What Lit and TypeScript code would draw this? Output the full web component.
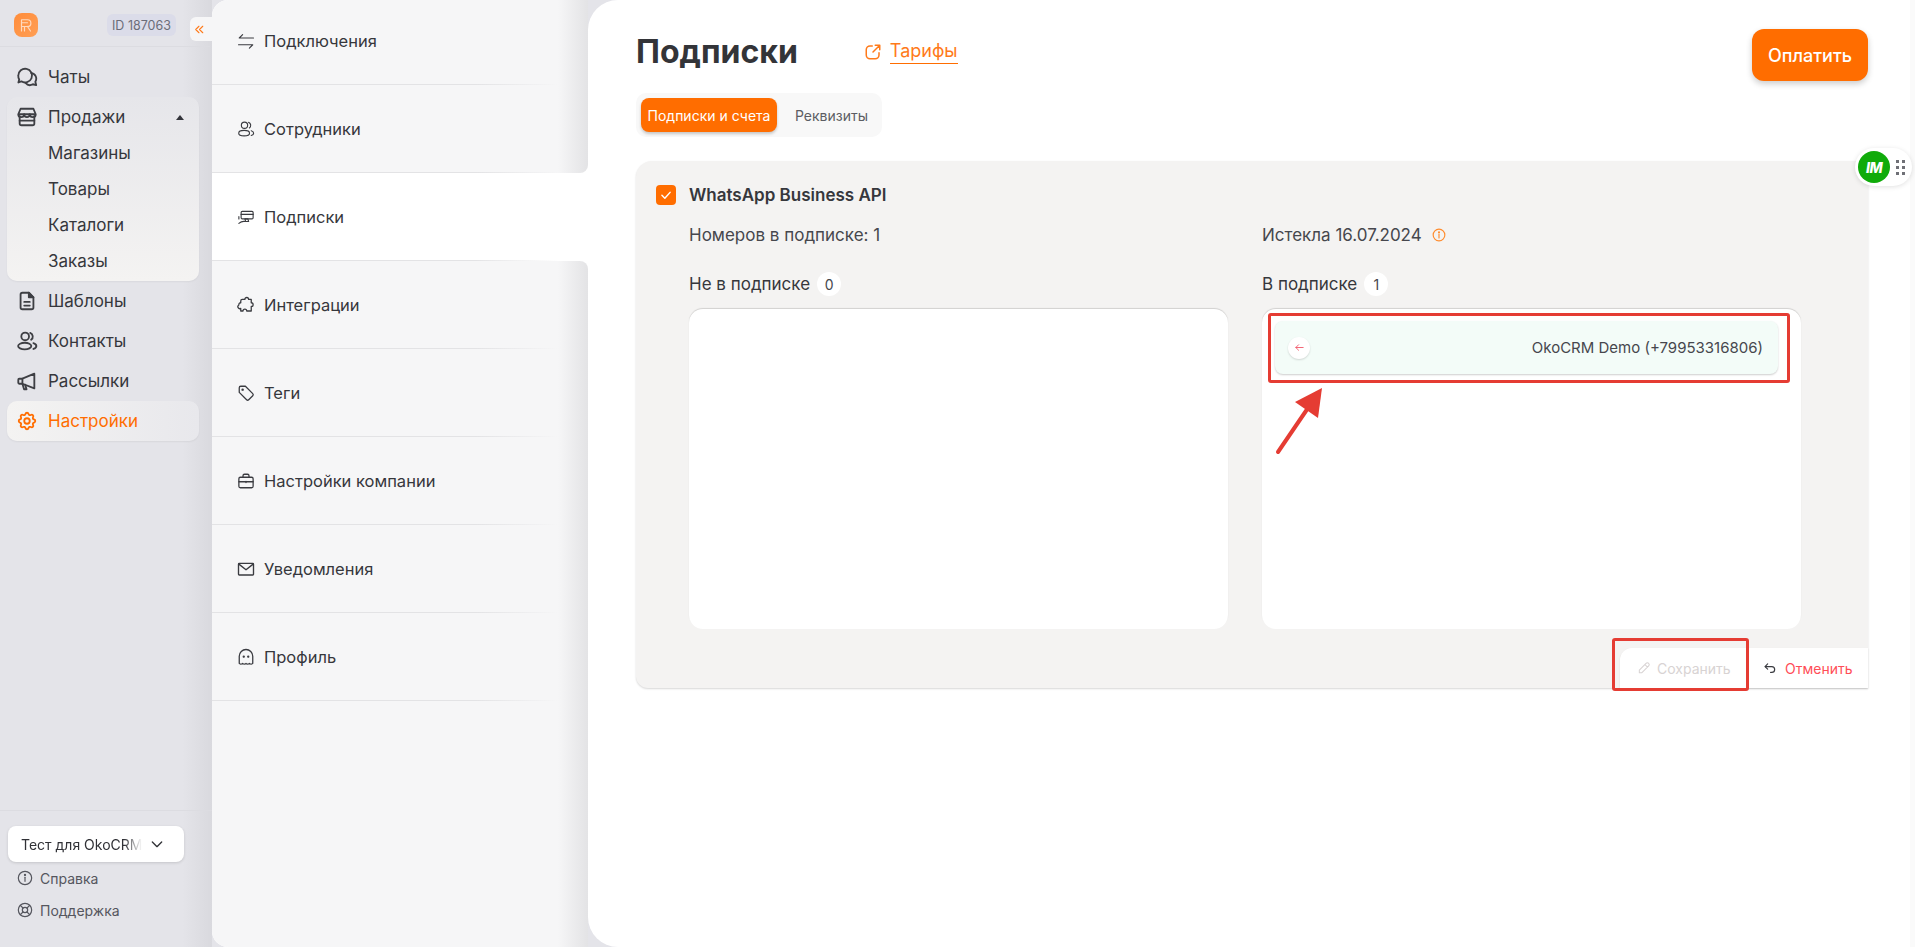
import { LitElement, html, css, svg } from "lit";
import { customElement } from "lit/decorators.js";

const ic = (body: unknown, size = 22, sw = 2) => html`<svg class="ic" width=${size} height=${size} viewBox="0 0 24 24" fill="none" stroke="currentColor" stroke-width=${sw} stroke-linecap="round" stroke-linejoin="round">${body}</svg>`;

const I = {
  chats: svg`<path d="M2.5 10.5a7.5 7.5 0 1 1 3.3 6.2L2.6 18l.9-3.2a7.5 7.5 0 0 1-1-4.3z"/><path d="M16.5 7.6a6.3 6.3 0 0 1 4.6 9.6l.9 3.6-3.6-.9a6.3 6.3 0 0 1-8-1.4"/>`,
  store: svg`<path d="M4 11v8a2 2 0 0 0 2 2h12a2 2 0 0 0 2-2v-8"/><path d="M5 3h14l2.5 6a3.2 3.2 0 0 1-6.4 0 3.1 3.1 0 0 1-6.2 0 3.2 3.2 0 0 1-6.4 0z"/><path d="M3 9h18M4 16h16"/>`,
  file: svg`<path d="M14 3H7a2 2 0 0 0-2 2v14a2 2 0 0 0 2 2h10a2 2 0 0 0 2-2V8z"/><path d="M14 3v5h5z" fill="currentColor"/><path d="M9 13h6M9 17h6"/>`,
  users: svg`<circle cx="10" cy="7" r="4.2"/><ellipse cx="9.5" cy="17.5" rx="7.2" ry="3.6"/><path d="M15.5 3.2a4.2 4.2 0 0 1 1 7.4"/><path d="M19 14.3c1.900.6 3.200 1.800 3.200 3.200s-1.300 2.600-3.200 3.200"/>`,
  mega: svg`<path d="M2.500 11.500v2.500a1 1 0 0 0 1 1H7l13 5V4L7 9.500H3.500a1 1 0 0 0-1 1z"/><path d="M7 9.500V15l1.800 6h2.700l-1.500-5"/>`,
  gear: svg`<path d="M10.325 4.317c.426 -1.756 2.924 -1.756 3.35 0a1.724 1.724 0 0 0 2.573 1.066c1.543 -.94 3.31 .826 2.37 2.37a1.724 1.724 0 0 0 1.065 2.572c1.756 .426 1.756 2.924 0 3.35a1.724 1.724 0 0 0 -1.066 2.573c.94 1.543 -.826 3.31 -2.37 2.37a1.724 1.724 0 0 0 -2.572 1.065c-.426 1.756 -2.924 1.756 -3.35 0a1.724 1.724 0 0 0 -2.573 -1.066c-1.543 .94 -3.31 -.826 -2.37 -2.37a1.724 1.724 0 0 0 -1.065 -2.572c-1.756 -.426 -1.756 -2.924 0 -3.35a1.724 1.724 0 0 0 1.066 -2.573c-.94 -1.543 .826 -3.31 2.37 -2.37c1 .608 2.296 .07 2.572 -1.065z"/><circle cx="12" cy="12" r="3"/>`,
  swap: svg`<path d="M22 8H3l4.500-4.500"/><path d="M2 17h19l-4.500 4.500"/>`,
  sub: svg`<path d="M7 4.500h13a1.500 1.500 0 0 1 1.500 1.500v7a1.500 1.500 0 0 1-1.500 1.500H7a1.500 1.500 0 0 1-1.500-1.500V6A1.500 1.500 0 0 1 7 4.500z"/><path d="M5.500 8.500h16"/><path d="M2.500 11.500v3M2.500 20.500c3-2.500 5-3 8-2.500h5l-1-3.500h-4l1 3.500"/>`,
  puzzle: svg`<path d="M8 4.500h3.500a2.500 2.500 0 0 1 5 0H20v4.500a2.500 2.500 0 0 1 0 5V20h-6a2.500 2.500 0 0 0-5 0H6v-3.500a2.500 2.500 0 0 1-2.500-4.500A2.500 2.500 0 0 1 6 9V6.500a2 2 0 0 1 2-2z" transform="translate(-1 0)"/>`,
  tag: svg`<path d="M3 5a2 2 0 0 1 2-2h6.200L21 12.800a2 2 0 0 1 0 2.800L15.600 21a2 2 0 0 1-2.800 0L3 11.200z"/><circle cx="7.500" cy="7.500" r=".8" fill="currentColor"/>`,
  case: svg`<rect x="2.500" y="7" width="19" height="14" rx="2"/><path d="M8 7V5a2 2 0 0 1 2-2h4a2 2 0 0 1 2 2v2"/><path d="M2.500 13h19M12 12.500v1.500"/>`,
  mail: svg`<rect x="2" y="4.500" width="20" height="15.500" rx="1"/><path d="M2.500 5.500 12 13l9.500-7.500"/>`,
  ghost: svg`<path d="M3 20.500V11a9 9 0 0 1 18 0v9.500c-1.500 1.300-3 1.300-4.500 0-1.500 1.300-3 1.300-4.500 0-1.500 1.300-3 1.300-4.500 0-1.500 1.300-3 1.300-4.500 0z"/><circle cx="9" cy="11.500" r=".7" fill="currentColor"/><circle cx="15" cy="11.500" r=".7" fill="currentColor"/>`,
  ext: svg`<path d="M11 4H8a5 5 0 0 0-5 5v7a5 5 0 0 0 5 5h7a5 5 0 0 0 5-5v-3"/><path d="M12 12 21 3M15 3h6v6"/>`,
  info: svg`<circle cx="12" cy="12" r="10"/><path d="M12 11v6"/><circle cx="12" cy="7.500" r=".8" fill="currentColor"/>`,
  buoy: svg`<circle cx="12" cy="12" r="10"/><circle cx="12" cy="12" r="4"/><path d="m5 5 4 4M19 5l-4 4M5 19l4-4M19 19l-4-4"/>`,
  chev: svg`<path d="m5 9 7 7 7-7"/>`,
  check: svg`<path d="m5 12.500 5 5 9-10"/>`,
  left: svg`<path d="M20 12H4M10 6l-6 6 6 6"/>`,
  pencil: svg`<path d="M4 20v-4.500L15.500 4a2.500 2.500 0 0 1 4.500 4.500L8.500 20zM13.500 6l4.500 4.500"/>`,
  undo: svg`<path d="M8 5 3.500 9.500 8 14"/><path d="M4 9.500h11a5 5 0 0 1 0 10h-2"/>`,
  dbl: svg`<path d="M11 6l-6 6 6 6M18 6l-6 6 6 6"/>`,
};

@customElement("app-root")
export class AppRoot extends LitElement {
  static styles = css`
    :host { display: block; height: 100vh; font-family: Inter, "Noto Sans", sans-serif; color: #36373c; }
    * { box-sizing: border-box; }
    .ic { display: block; flex: none; }
    .root { position: relative; display: flex; height: 947px; width: 1915px; overflow: hidden; background: #e4e4e9; }

    .side { width: 212px; flex: none; display: flex; flex-direction: column; background: linear-gradient(to right, #e4e4e9 86%, #d9d9de 100%); }
    .top { height: 47px; flex: none; display: flex; align-items: flex-start; justify-content: space-between; padding: 13px 34px 0 14px; border-bottom: 1px solid #dcdce1; margin-right: 2px; }
    .logo { width: 24px; height: 24px; border-radius: 8px; background: linear-gradient(135deg, #ff8c3a, #ff9f55); display: flex; align-items: center; justify-content: center; color: #ffd9bd; }
    .id { height: 22px; width: 69px; margin-top: 1px; border-radius: 6px; background: #dbdce9; color: #6b6c78; font-size: 12.500px; display: flex; align-items: center; justify-content: center; }
    nav { padding-top: 10px; display: flex; flex-direction: column; }
    .nv { height: 40px; margin: 0 13px 0 7px; padding-left: 9px; display: flex; align-items: center; gap: 10px; font-size: 17px; border-radius: 10px; color: #36373c; }
    .nv .ic { color: #3e3f44; }
    .grp { margin: 0 13px 0 7px; padding: 2px 0; height: 184px; border-radius: 10px; background: linear-gradient(to bottom, #e6e6ea, #f4f3f2); box-shadow: 0 1px 2px rgba(0,0,0,.05); }
    .gh { height: 36px; padding: 0 15px 0 9px; display: flex; align-items: center; gap: 10px; font-size: 17px; }
    .gh .ic { color: #3e3f44; }
    .caret { margin-left: auto; width: 0; height: 0; border: 4px solid transparent; border-bottom: 5px solid #33343a; border-top: 0; }
    .gs { height: 36px; padding-left: 41px; display: flex; align-items: center; font-size: 17px; }
    .nv.on { color: #ff6d00; background: linear-gradient(to right, #f4f3f2, #e8e8ec); box-shadow: 0 1px 2px rgba(0,0,0,.06); }
    .nv.on .ic { color: #ff6d00; }
    .foot { margin-top: auto; height: 137px; border-top: 1px solid #dcdce1; padding: 15px 0 0 8px; }
    .sel { width: 176px; height: 36px; border-radius: 8px; background: #fff; box-shadow: 0 1px 3px rgba(0,0,0,.14); display: flex; align-items: center; padding-left: 13px; font-size: 14px; color: #303136; }
    .sel span { width: 121px; white-space: nowrap; overflow: hidden; -webkit-mask-image: linear-gradient(to right, #000 85%, transparent); mask-image: linear-gradient(to right, #000 85%, transparent); }
    .sel .ic { margin-left: 7px; }
    .hl { height: 32px; display: flex; align-items: center; gap: 7px; padding-left: 9px; font-size: 14px; color: #55565e; }
    .hl:first-of-type { margin-top: 10px; }
    .coll { position: absolute; left: 190px; top: 17px; width: 26px; height: 24px; border-radius: 6px 0 0 6px; background: #f6f6f7; color: #ff7a1a; display: flex; align-items: center; padding-left: 3px; }

    .panel { position: relative; width: 376px; flex: none; display: flex; flex-direction: column; background: #fff; border-radius: 16px 0 0 16px; overflow: hidden; }
    .pg { background: linear-gradient(to right, #f6f6f7 92%, #e3e3e5 100%); }
    .pg.a { margin-top: -3px; border-bottom-right-radius: 8px; }
    .pg.b { flex: 1; border-top-right-radius: 8px; }
    .row { height: 88px; padding-left: 25px; display: flex; align-items: center; gap: 9px; font-size: 16.500px; color: #36373c; border-bottom: 1px solid transparent; border-image: linear-gradient(to right, #e3e3e5 70%, transparent 92%) 1; }
    .row .ic { color: #3a3b40; }
    .pg.a .row:last-child { height: 88px; }
    .row.act { background: #fff; }

    .main { position: relative; flex: 1; min-width: 0; background: #fff; border-radius: 30px 0 0 30px; padding: 29px 47px 0 48px; }
    .hd { display: flex; align-items: flex-start; height: 52px; }
    h1 { margin: 3px 0 0; font-size: 32px; line-height: 40px; font-weight: 700; color: #333438; }
    .lnk { margin-left: 66px; margin-top: 11px; display: flex; align-items: flex-start; gap: 8px; color: #ff7a1a; font-size: 18px; }
    .lnk span { line-height: 22px; border-bottom: 1px solid #ff6d00; padding-bottom: 1px; }
    .lnk .ic { margin-top: 3px; }
    .pay { margin-left: auto; width: 116px; height: 52px; border-radius: 12px; background: #ff6d00; color: #fff; font-size: 18px; font-weight: 500; display: flex; align-items: center; justify-content: center; box-shadow: 0 3px 6px rgba(0,0,0,.2); }
    .tabs { margin-top: 12px; width: 246px; height: 44px; padding: 5px; border-radius: 10px; background: #f8f8f8; display: flex; align-items: center; font-size: 14px; }
    .tab.on { width: 136px; height: 34px; border-radius: 8px; background: #ff6d00; color: #fff; display: flex; align-items: center; justify-content: center; box-shadow: 0 2px 3px rgba(0,0,0,.2); }
    .tab { color: #5c5d63; }
    .tab.off { margin-left: 18px; }
    .card { position: relative; margin-top: 24px; height: 527px; border-radius: 16px 0 0 12px; background: #f4f3f2; box-shadow: 0 1px 2px rgba(0,0,0,.16); padding: 24px 0 0 20px; }
    .ch { display: flex; align-items: center; gap: 13px; height: 20px; font-size: 17px; font-weight: 600; color: #36373c; }
    .cb { width: 20px; height: 20px; border-radius: 4px; background: #ff6d00; color: #fff; display: flex; align-items: center; justify-content: center; }
    .cols { margin: 18px 0 0 33px; display: grid; grid-template-columns: 539px 539px; column-gap: 34px; }
    .info { height: 24px; display: flex; align-items: center; font-size: 17px; color: #46474d; gap: 10px; }
    .lab { margin-top: 25px; height: 24px; display: flex; align-items: center; gap: 7px; font-size: 17px; color: #36373c; }
    .bd { width: 24px; height: 24px; border-radius: 50%; background: #fff; font-size: 14px; color: #46474d; display: flex; align-items: center; justify-content: center; }
    .box { margin-top: 13px; height: 320px; border-radius: 14px; background: #fff; box-shadow: 0 -1px 1px rgba(0,0,0,.14); padding: 12px 23px 0 13px; }
    .num { height: 53px; border-radius: 8px; background: #f3fcf8; box-shadow: 0 1px 2px rgba(0,0,0,.2); display: flex; align-items: center; padding: 0 15px 0 13px; font-size: 15px; color: #46474d; }
    .back { width: 22px; height: 22px; border-radius: 50%; background: #fff; color: #f25a6b; display: flex; align-items: center; justify-content: center; box-shadow: 0 1px 2px rgba(0,0,0,.15); margin-right: auto; }
    .bar { position: absolute; right: 0; bottom: 0; height: 40px; display: flex; background: #fff; box-shadow: 0 1px 2px rgba(0,0,0,.1); border-radius: 12px 0 0 0; font-size: 14px; }
    .save { width: 130px; padding-left: 17px; display: flex; align-items: center; gap: 6px; color: #d8d3d3; }
    .cancel { width: 118px; padding-left: 13px; display: flex; align-items: center; gap: 8px; color: #ff4d57; }
    .cancel .ic { color: #3a3b40; }

    .mark { position: absolute; border: 3px solid #e53c33; border-radius: 3px; pointer-events: none; }
    .m1 { left: 1268px; top: 313px; width: 522px; height: 70px; }
    .m2 { left: 1612px; top: 638px; width: 137px; height: 53px; }
    .arrow { position: absolute; left: 1270px; top: 380px; }
    .scroll { position: absolute; right: 0; top: 0; bottom: 0; width: 5px; background: #fafafa; }
    .wid { position: absolute; left: 1855px; top: 148px; width: 57px; height: 38px; border-radius: 19px; background: #fff; box-shadow: 0 1px 5px rgba(0,0,0,.12); display: flex; align-items: center; padding-left: 3px; gap: 6px; }
    .im { width: 32px; height: 32px; border-radius: 50%; background: #10ab0a; color: #fff; font-size: 14px; font-weight: 800; font-style: italic; display: flex; align-items: center; justify-content: center; letter-spacing: -.5px; }
    .dots { display: grid; grid-template-columns: 3px 3px; gap: 3px; }
    .dots i { width: 3px; height: 3px; background: #6f7076; }
  `;

  render() {
    const sub = ["Магазины", "Товары", "Каталоги", "Заказы"];
    return html`<div class="root">
      <aside class="side">
        <div class="top">
          <div class="logo">${ic(svg`<path d="M6 5h8a4.500 4.500 0 0 1 0 9H6M6 9h8M6 5v15M10 14v6M14 14l4 6"/>`, 18, 1.6)}</div>
          <div class="id">ID 187063</div>
        </div>
        <nav>
          <div class="nv">${ic(I.chats)}Чаты</div>
          <div class="grp">
            <div class="gh">${ic(I.store)}Продажи<i class="caret"></i></div>
            ${sub.map((s) => html`<div class="gs">${s}</div>`)}
          </div>
          <div class="nv">${ic(I.file)}Шаблоны</div>
          <div class="nv">${ic(I.users)}Контакты</div>
          <div class="nv">${ic(I.mega)}Рассылки</div>
          <div class="nv on">${ic(I.gear)}Настройки</div>
        </nav>
        <div class="foot">
          <div class="sel"><span>Тест для OkoCRM</span>${ic(I.chev, 16)}</div>
          <div class="hl">${ic(I.info, 16, 1.800)}Справка</div>
          <div class="hl">${ic(I.buoy, 16, 1.800)}Поддержка</div>
        </div>
      </aside>
      <div class="coll">${ic(I.dbl, 13, 2)}</div>

      <section class="panel">
        <div class="pg a">
          <div class="row">${ic(I.swap, 18, 1.500)}Подключения</div>
          <div class="row">${ic(I.users, 18, 1.500)}Сотрудники</div>
        </div>
        <div class="row act">${ic(I.sub, 18, 1.500)}Подписки</div>
        <div class="pg b">
          <div class="row">${ic(I.puzzle, 18, 1.700)}Интеграции</div>
          <div class="row">${ic(I.tag, 18, 1.700)}Теги</div>
          <div class="row">${ic(I.case, 18, 1.700)}Настройки компании</div>
          <div class="row">${ic(I.mail, 18, 1.800)}Уведомления</div>
          <div class="row">${ic(I.ghost, 18, 1.700)}Профиль</div>
        </div>
      </section>

      <main class="main">
        <div class="hd">
          <h1>Подписки</h1>
          <div class="lnk">${ic(I.ext, 18, 2)}<span>Тарифы</span></div>
          <div class="pay">Оплатить</div>
        </div>
        <div class="tabs"><div class="tab on">Подписки и счета</div><div class="tab off">Реквизиты</div></div>
        <div class="card">
          <div class="ch"><div class="cb">${ic(I.check, 14, 2.500)}</div>WhatsApp Business API</div>
          <div class="cols">
            <div>
              <div class="info">Номеров в подписке: 1</div>
              <div class="lab">Не в подписке <div class="bd">0</div></div>
              <div class="box"></div>
            </div>
            <div>
              <div class="info">Истекла 16.07.2024 <span style="color:#ff8c2e">${ic(I.info, 14, 2)}</span></div>
              <div class="lab">В подписке <div class="bd">1</div></div>
              <div class="box">
                <div class="num"><div class="back">${ic(I.left, 11, 2)}</div>OkoCRM Demo (+79953316806)</div>
              </div>
            </div>
          </div>
          <div class="bar">
            <div class="save">${ic(I.pencil, 14, 1.800)}Сохранить</div>
            <div class="cancel">${ic(I.undo, 14, 2)}Отменить</div>
          </div>
        </div>
      </main>

      <div class="scroll"></div>
      <div class="mark m1"></div>
      <div class="mark m2"></div>
      <svg class="arrow" width="60" height="80" viewBox="0 0 60 80"><path d="M8 72 L40 25" stroke="#e53c33" stroke-width="4" stroke-linecap="round"/><path d="M52 8 L25 22 L48 38z" fill="#e53c33"/></svg>
      <div class="wid"><div class="im">IM</div><div class="dots"><i></i><i></i><i></i><i></i><i></i><i></i></div></div>
    </div>`;
  }
}
